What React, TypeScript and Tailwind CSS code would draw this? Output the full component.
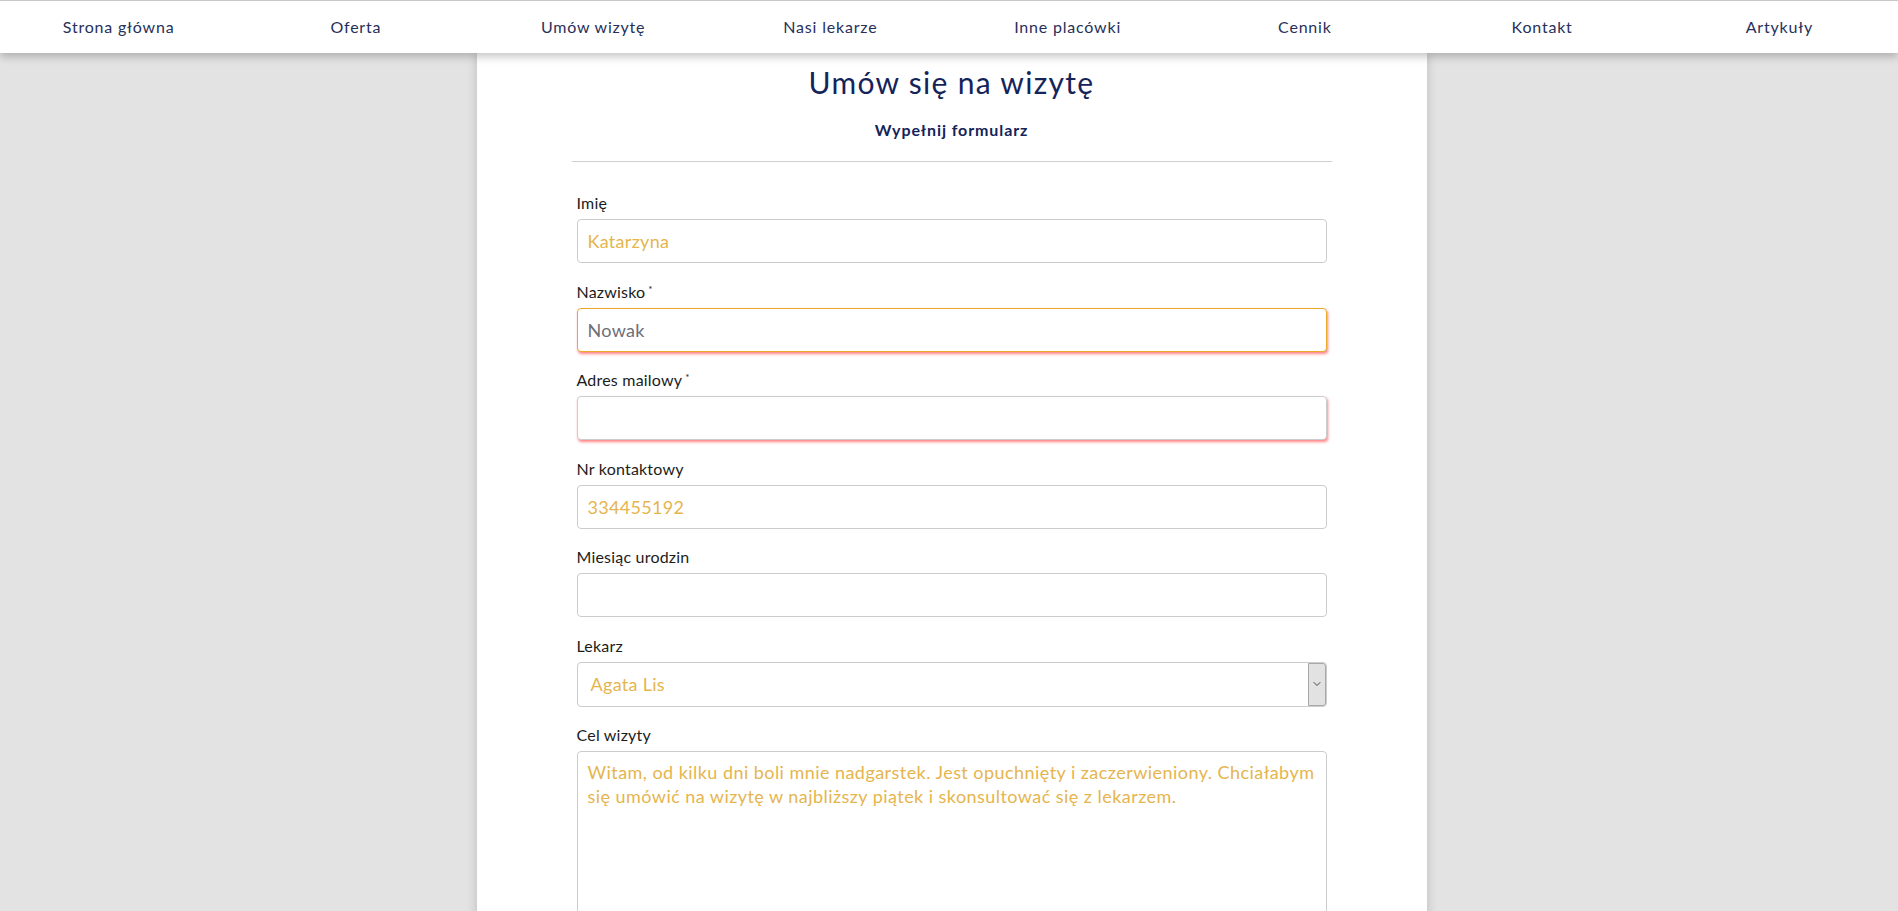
import { ChevronDown } from "lucide-react";

const navItems = [
  "Strona główna",
  "Oferta",
  "Umów wizytę",
  "Nasi lekarze",
  "Inne placówki",
  "Cennik",
  "Kontakt",
  "Artykuły",
];

const inputBase =
  "block w-full h-[44px] rounded-[4px] border bg-white px-[10px] text-[18px] tracking-[0.3px] outline-none";

function Field({
  label,
  required,
  children,
}: {
  label: string;
  required?: boolean;
  children: React.ReactNode;
}) {
  return (
    <div className="mb-[16.5px]">
      <label className="mb-1 block text-[16px] leading-6 tracking-[0.2px] text-[#1c1c1c]">
        {label}
        {required && <sup className="ml-[3px] text-[10px]">*</sup>}
      </label>
      {children}
    </div>
  );
}

export default function App() {
  return (
    <div className="flex min-h-screen flex-col bg-[#e3e3e3] font-['Lato',sans-serif]">
      {/* top navigation */}
      <nav className="relative z-10 grid h-[53px] grid-cols-8 items-center border-t border-[#c9c9c9] bg-white shadow-[0_4px_8px_rgba(0,0,0,0.22)]">
        {navItems.map((item) => (
          <a
            key={item}
            href="#"
            className="text-center text-[16px] tracking-[0.8px] text-[#27305a]"
          >
            {item}
          </a>
        ))}
      </nav>

      {/* form card */}
      <main className="flex flex-1 justify-center pl-[5px]">
        <div className="w-[950px] bg-white pt-[11px] shadow-[0_0_10px_rgba(0,0,0,0.18)]">
          <h1 className="text-center text-[30px] leading-9 tracking-[1.3px] text-[#14245a]">
            Umów się na wizytę
          </h1>
          <p className="mt-[18px] text-center text-[16px] font-bold leading-6 tracking-[0.9px] text-[#14245a]">
            Wypełnij formularz
          </p>
          <hr className="mx-auto mt-[19px] w-[760px] border-[#cfcfcf]" />

          <form className="mx-auto mt-[29px] w-[750px]">
            <Field label="Imię">
              <input
                className={`${inputBase} border-[#cccccc] placeholder:text-[#e5b54e]`}
                placeholder="Katarzyna"
              />
            </Field>
            <Field label="Nazwisko" required>
              <input
                className={`${inputBase} border-[#eaa92a] text-[#6e6e78] shadow-[1px_2px_3px_rgba(255,90,90,0.75)]`}
                defaultValue="Nowak"
              />
            </Field>
            <Field label="Adres mailowy" required>
              <input
                className={`${inputBase} border-[#cccccc] shadow-[1px_2px_3px_rgba(255,90,90,0.75)]`}
              />
            </Field>
            <Field label="Nr kontaktowy">
              <input
                className={`${inputBase} border-[#cccccc] placeholder:text-[#e5b54e]`}
                placeholder="334455192"
              />
            </Field>
            <Field label="Miesiąc urodzin">
              <input className={`${inputBase} border-[#cccccc]`} />
            </Field>
            <Field label="Lekarz">
              <div className="relative flex h-[45px] items-center rounded-[4px] border border-[#cccccc] bg-white pl-[13px] text-[18px] tracking-[0.3px] text-[#e5b54e]">
                Agata Lis
                <span className="absolute top-0 right-0 bottom-0 flex w-[18px] items-center justify-center rounded-r-[3px] border border-[#a9a9a9] bg-[#e2e2e2] text-[#444]">
                  <ChevronDown size={12} strokeWidth={2} />
                </span>
              </div>
            </Field>
            <Field label="Cel wizyty">
              <textarea
                className="block h-[220px] w-full resize-none rounded-[4px] border border-[#cccccc] bg-white py-[8px] pr-[4px] pl-[10px] text-[18px] leading-6 tracking-[0.45px] outline-none placeholder:text-[#e5b54e]"
                placeholder="Witam, od kilku dni boli mnie nadgarstek. Jest opuchnięty i zaczerwieniony. Chciałabym się umówić na wizytę w najbliższy piątek i skonsultować się z lekarzem."
              />
            </Field>
          </form>
        </div>
      </main>
    </div>
  );
}
